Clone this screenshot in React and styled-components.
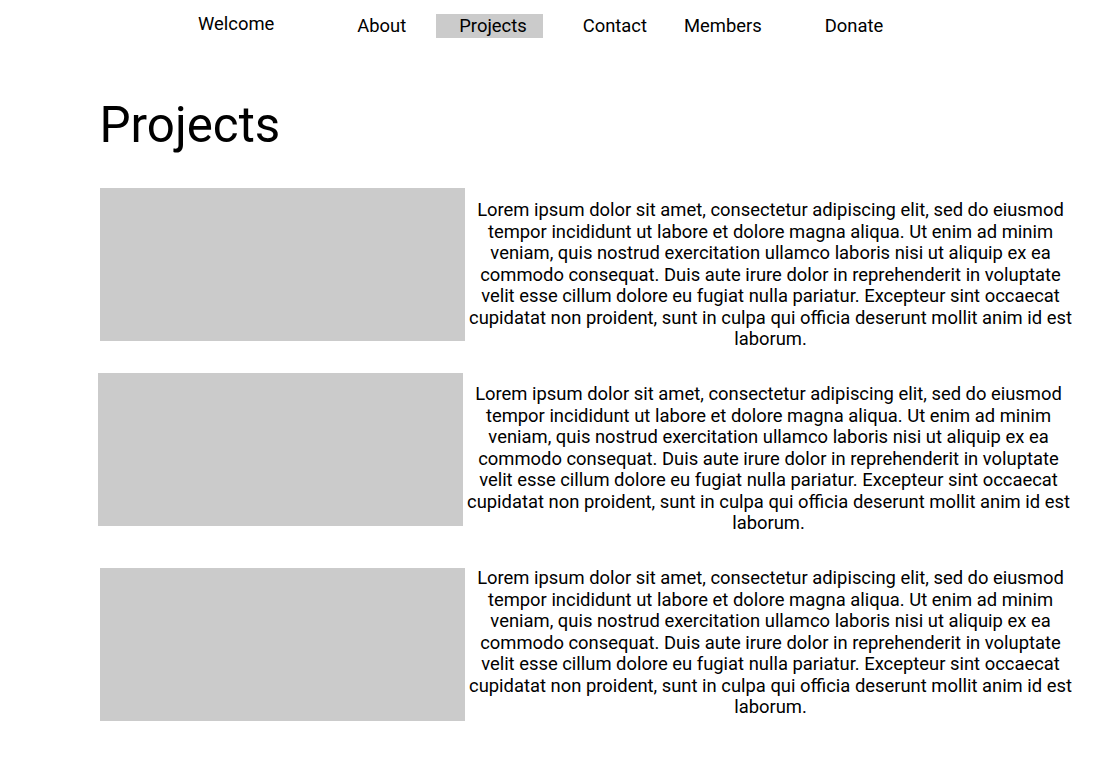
import React from "react";
import styled, { createGlobalStyle } from "styled-components";

const GlobalStyle = createGlobalStyle`
  html, body { margin: 0; padding: 0; background: #ffffff; }
  body { font-family: Roboto, "Noto Sans", Arial, sans-serif; color: #000; }
`;

const Nav = styled.nav`
  display: flex;
  align-items: flex-start;
  padding: 0 0 0 198px;
  height: 38px;
`;

const Brand = styled.a`
  display: block;
  margin-top: 11.5px;
  font-size: 18.4px;
  line-height: 24px;
  color: #000;
  text-decoration: none;
`;

const NavLink = styled.a`
  display: block;
  margin-top: 14px;
  margin-left: ${(p) => p.$gap}px;
  padding: ${(p) => (p.$active ? "0 16px 0 23px" : "0")};
  background: ${(p) => (p.$active ? "#cbcbcb" : "transparent")};
  font-size: 18.4px;
  line-height: 24px;
  color: #000;
  text-decoration: none;
`;

const Main = styled.main`
  padding: 0 0 40px 100px;
`;

const Title = styled.h1`
  margin: 58px 0 34px -0.5px;
  font-size: 49.3px;
  font-weight: 400;
  line-height: 58px;
`;

const ProjectList = styled.div`
  display: flex;
  flex-direction: column;
  gap: 22.5px;
`;

const Row = styled.section`
  display: flex;
  align-items: flex-start;
`;

const Thumb = styled.div`
  flex: none;
  width: 365px;
  height: 153px;
  margin-left: ${(p) => p.$dx || 0}px;
  margin-top: ${(p) => p.$dy || 0}px;
  background: #cbcbcb;
`;

const Blurb = styled.p`
  flex: none;
  width: 611px;
  margin: 0;
  padding-top: 11px;
  font-size: 18.4px;
  line-height: 21.5px;
  text-align: center;
`;

const LOREM =
  "Lorem ipsum dolor sit amet, consectetur adipiscing elit, sed do eiusmod tempor incididunt ut labore et dolore magna aliqua. Ut enim ad minim veniam, quis nostrud exercitation ullamco laboris nisi ut aliquip ex ea commodo consequat. Duis aute irure dolor in reprehenderit in voluptate velit esse cillum dolore eu fugiat nulla pariatur. Excepteur sint occaecat cupidatat non proident, sunt in culpa qui officia deserunt mollit anim id est laborum.";

const projects = [
  { id: 1, dx: 0, dy: 0 },
  { id: 2, dx: -2, dy: 1 },
  { id: 3, dx: 0, dy: 12 },
];

export default function App() {
  return (
    <>
      <GlobalStyle />
      <Nav>
        <Brand href="#">Welcome</Brand>
        <NavLink href="#" $gap={83}>About</NavLink>
        <NavLink href="#" $gap={30} $active>Projects</NavLink>
        <NavLink href="#" $gap={40}>Contact</NavLink>
        <NavLink href="#" $gap={37}>Members</NavLink>
        <NavLink href="#" $gap={63}>Donate</NavLink>
      </Nav>
      <Main>
        <Title>Projects</Title>
        <ProjectList>
          {projects.map((p) => (
            <Row key={p.id}>
              <Thumb $dx={p.dx} $dy={p.dy} />
              <Blurb>{LOREM}</Blurb>
            </Row>
          ))}
        </ProjectList>
      </Main>
    </>
  );
}
